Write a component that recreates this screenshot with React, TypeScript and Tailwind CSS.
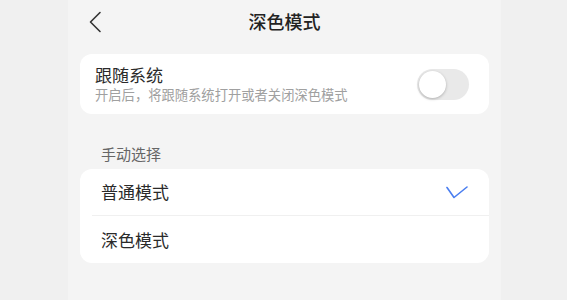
import React from "react";

export default function App() {
  const font = { fontFamily: '"Noto Sans CJK SC", "Noto Sans", sans-serif' };
  return (
    <div className="w-[567px] h-[300px] bg-[#f0f0f0] flex" style={font}>
      <div className="ml-[68px] w-[433px] h-full bg-[#f4f4f4] px-3 flex flex-col">
        <div className="relative h-[42px] flex items-center justify-center">
          <svg
            className="absolute left-[8px] top-[11px]"
            width="14"
            height="22"
            viewBox="0 0 14 22"
            fill="none"
          >
            <path d="M12 1.5 L2.5 11 L12 20.5" stroke="#333" strokeWidth="1.6" strokeLinecap="round" strokeLinejoin="round" />
          </svg>
          <span className="text-[18px] font-medium text-[#222] leading-none">深色模式</span>
        </div>
        <div className="mt-3 h-[60px] rounded-xl bg-white flex items-center justify-between pl-[15px] pr-[20px]">
          <div className="flex flex-col">
            <span className="text-[17px] leading-[22px] text-[#2a2a2a]">跟随系统</span>
            <span className="text-[13.3px] leading-[18px] text-[#a0a0a0]">开启后，将跟随系统打开或者关闭深色模式</span>
          </div>
          <div className="w-[52px] h-[31px] rounded-full bg-[#e9e9e9] flex items-center px-[2px]">
            <div className="w-[27px] h-[27px] rounded-full bg-white shadow-[0_1px_3px_rgba(0,0,0,0.25)]" />
          </div>
        </div>
        <div className="pt-[30px] pb-[5px] pl-[21px] text-[15px] leading-[20px] text-[#666]">手动选择</div>
        <div className="rounded-xl bg-white flex flex-col">
          <div className="h-[46px] flex items-center justify-between pl-[21px] pr-[21px]">
            <span className="text-[17px] text-[#2a2a2a]">普通模式</span>
            <svg width="22" height="13" viewBox="0 0 22 13" fill="none">
              <path d="M1 1.5 L8 11.5 L21 1" stroke="#4a7ef0" strokeWidth="1.6" strokeLinecap="round" strokeLinejoin="round" />
            </svg>
          </div>
          <div className="ml-3 h-px bg-[#f0f0f0]" />
          <div className="h-[47px] flex items-center pl-[21px]">
            <span className="text-[17px] text-[#2a2a2a]">深色模式</span>
          </div>
        </div>
      </div>
    </div>
  );
}
